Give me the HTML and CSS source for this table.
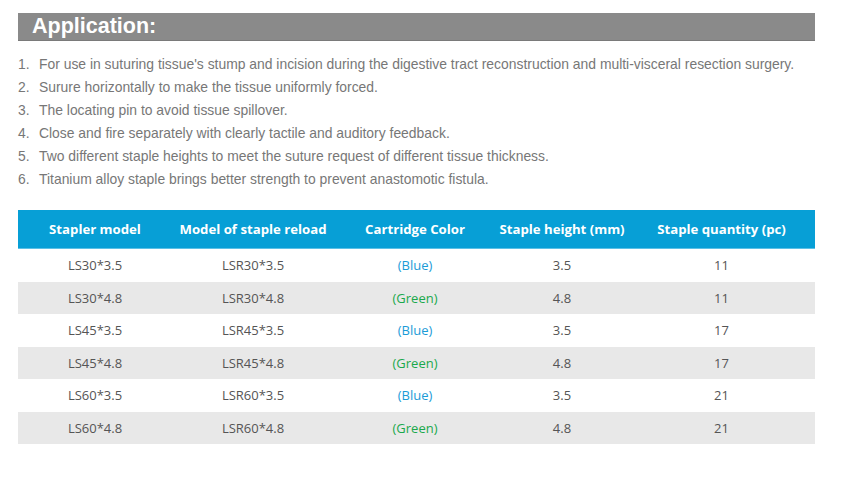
FILE: index.html
```html
<!DOCTYPE html>
<html>
<head>
<meta charset="utf-8">
<link rel="stylesheet" href="styles.css">
</head>
<body>
<div class="page">
  <div class="title-bar"><h1 class="title">Application:</h1></div>
  <ol class="apps">
    <li>For use in suturing tissue's stump and incision during the digestive tract reconstruction and multi-visceral resection surgery.</li>
    <li>Surure horizontally to make the tissue uniformly forced.</li>
    <li>The locating pin to avoid tissue spillover.</li>
    <li>Close and fire separately with clearly tactile and auditory feedback.</li>
    <li>Two different staple heights to meet the suture request of different tissue thickness.</li>
    <li>Titanium alloy staple brings better strength to prevent anastomotic fistula.</li>
  </ol>
  <table class="spec">
    <colgroup>
      <col class="c1"><col class="c2"><col class="c3"><col class="c4"><col class="c5">
    </colgroup>
    <thead>
      <tr><th>Stapler model</th><th>Model of staple reload</th><th>Cartridge Color</th><th>Staple height (mm)</th><th>Staple quantity (pc)</th></tr>
    </thead>
    <tbody>
      <tr><td>LS30*3.5</td><td>LSR30*3.5</td><td class="blue">(Blue)</td><td>3.5</td><td>11</td></tr>
      <tr class="alt"><td>LS30*4.8</td><td>LSR30*4.8</td><td class="green">(Green)</td><td>4.8</td><td>11</td></tr>
      <tr><td>LS45*3.5</td><td>LSR45*3.5</td><td class="blue">(Blue)</td><td>3.5</td><td>17</td></tr>
      <tr class="alt"><td>LS45*4.8</td><td>LSR45*4.8</td><td class="green">(Green)</td><td>4.8</td><td>17</td></tr>
      <tr><td>LS60*3.5</td><td>LSR60*3.5</td><td class="blue">(Blue)</td><td>3.5</td><td>21</td></tr>
      <tr class="alt"><td>LS60*4.8</td><td>LSR60*4.8</td><td class="green">(Green)</td><td>4.8</td><td>21</td></tr>
    </tbody>
  </table>
</div>
</body>
</html>
```
FILE: styles.css
```css
html, body {
  margin: 0;
  padding: 0;
  background: #ffffff;
}
.page {
  width: 797px;
  padding: 13px 0 0 18px;
}
.title-bar {
  background: #8a8a8a;
  height: 27px;
  border-bottom: 1px solid #7a7a7a;
  display: flex;
  align-items: center;
  padding-left: 14px;
}
.title {
  margin: 0;
  font-family: "Liberation Sans", Arial, sans-serif;
  font-weight: bold;
  font-size: 21.5px;
  color: #ffffff;
  line-height: 27px;
}
.apps {
  margin: 12px 0 0 0;
  padding: 0;
  list-style: none;
  counter-reset: item;
  font-family: "Liberation Sans", Arial, sans-serif;
  font-size: 13.9px;
  color: #777777;
}
.apps li {
  counter-increment: item;
  height: 23px;
  line-height: 23px;
  display: flex;
}
.apps li::before {
  content: counter(item) ".";
  width: 21px;
  flex: none;
}
.spec {
  margin-top: 19px;
  width: 797px;
  border-collapse: collapse;
  table-layout: fixed;
  font-family: "Open Sans", "Noto Sans", sans-serif;
  font-size: 13px;
  color: #555555;
  text-align: center;
}
.c1 { width: 154px; }
.c2 { width: 162px; }
.c3 { width: 162px; }
.c4 { width: 132px; }
.c5 { width: 187px; }
.spec th {
  background: #079fd6;
  color: #ffffff;
  font-weight: bold;
  font-size: 13.2px;
  white-space: nowrap;
  height: 38px;
  padding: 0;
  border-bottom: 1px solid #5cc0e6;
}
.spec td {
  height: 32.5px;
  padding: 0;
  white-space: nowrap;
}
.spec tr.alt td {
  background: #e8e8e8;
}
.blue { color: #1b9bd7; }
.green { color: #1aa84c; }
```
